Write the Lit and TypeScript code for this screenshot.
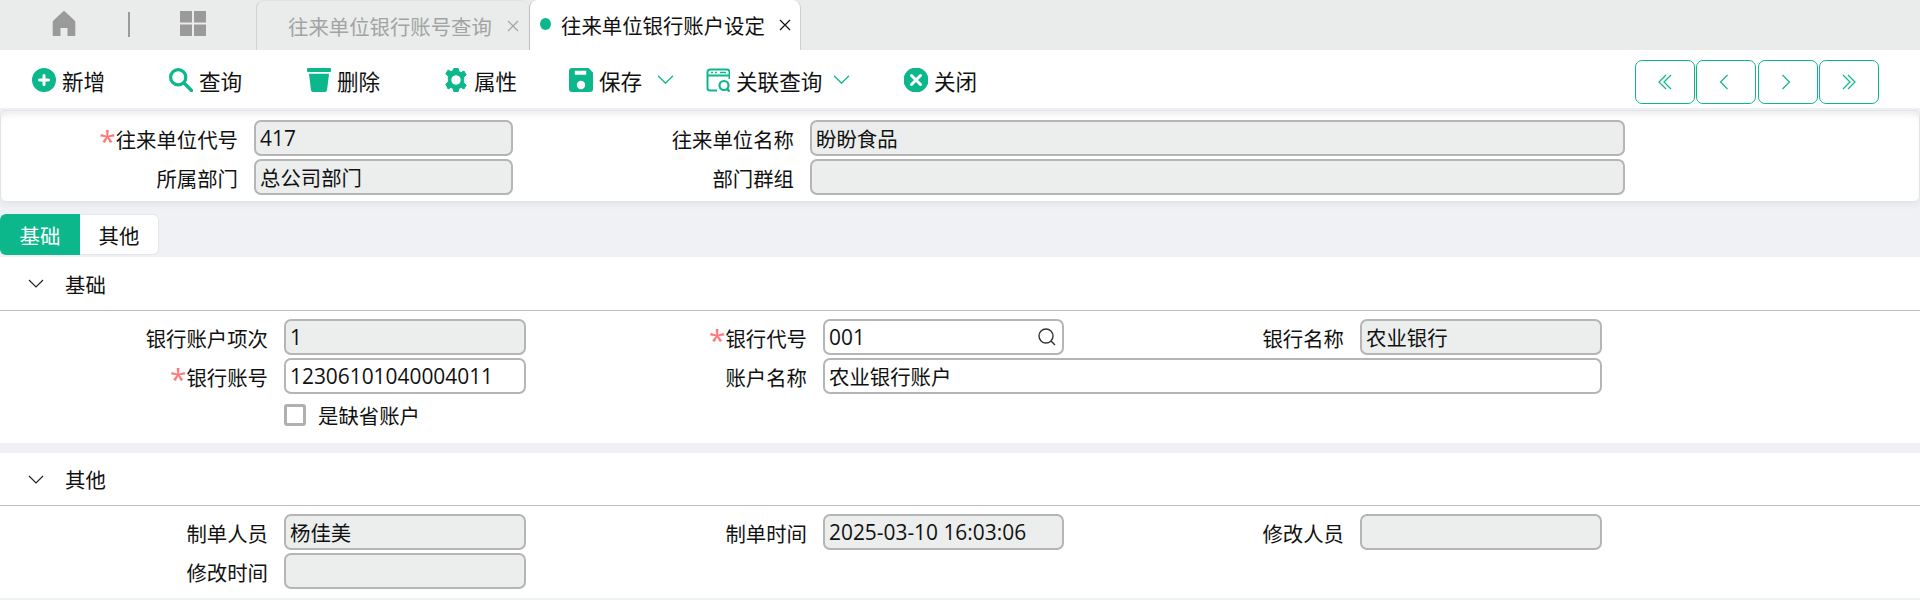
import { LitElement, html, css, svg } from "lit";
import { customElement } from "lit/decorators.js";

const icons: Record<string, unknown> = {
  add: svg`<circle cx="12" cy="12" r="12" fill="#0cb78c"/><path d="M12 7.500v9M7.500 12h9" stroke="#fff" stroke-width="3" stroke-linecap="round"/>`,
  search: svg`<circle cx="9.200" cy="9.200" r="7.600" fill="none" stroke="#0cb78c" stroke-width="3.200"/><path d="M15 15l7.500 7.500" stroke="#0cb78c" stroke-width="3.400" stroke-linecap="round"/>`,
  trash: svg`<rect x="0" y="0" width="24" height="4" rx="1" fill="#0cb78c"/><path d="M2 5.800h20l-1.900 16a2.400 2.400 0 0 1-2.400 2.200H6.300a2.400 2.400 0 0 1-2.400-2.200z" fill="#0cb78c"/>`,
  gear: svg`<path fill-rule="evenodd" fill="#0cb78c" stroke="#0cb78c" stroke-width="1" stroke-linejoin="round" d="M9.800.500h4.400l.7 3.100 2.200 1 2.800-1.600 2.300 3.900-2.500 2v6.200l2.500 2-2.300 3.900-2.800-1.600-2.200 1-.7 3.100H9.800l-.7-3.100-2.200-1-2.800 1.600L1.800 16.100l2.500-2V7.900l-2.500-2L4.100 2l2.800 1.600 2.200-1zM12 6.800a5.200 5.200 0 1 0 0 10.400a5.200 5.200 0 0 0 0-10.400z"/>`,
  save: svg`<path fill-rule="evenodd" fill="#0cb78c" d="M3 0h16.500L24 4.500V21a3 3 0 0 1-3 3H3a3 3 0 0 1-3-3V3a3 3 0 0 1 3-3zM5.800 2.800v4h11.400v-4zM12 12.800a4.200 4.200 0 1 0 0 8.400a4.200 4.200 0 0 0 0-8.400z"/>`,
  rel: svg`<path d="M11 22.500H4a2.500 2.500 0 0 1-2.500-2.500V4A2.500 2.500 0 0 1 4 1.500h17A2.500 2.500 0 0 1 23.500 4v7" fill="none" stroke="#0cb78c" stroke-width="2"/><path d="M2 7.500h21" stroke="#0cb78c" stroke-width="2"/><path d="M5 4.500h2M9 4.500h2M14 4.500h6" stroke="#0cb78c" stroke-width="1.600"/><circle cx="18" cy="17.500" r="4.500" fill="none" stroke="#0cb78c" stroke-width="2.200"/><path d="M21 21l2.500 2.500" stroke="#0cb78c" stroke-width="2.400"/>`,
  close: svg`<circle cx="12" cy="12" r="12.500" fill="#0cb78c"/><path d="M7.500 7.500l9 9M16.500 7.500l-9 9" stroke="#fff" stroke-width="3" stroke-linecap="round"/>`,
};

const actions = [
  { icon: "add", text: "新增", gap: "" },
  { icon: "search", text: "查询", gap: "" },
  { icon: "trash", text: "删除", gap: "" },
  { icon: "gear", text: "属性", gap: "" },
  { icon: "save", text: "保存", gap: "wide" },
  { icon: "rel", text: "关联查询", gap: "narrow" },
  { icon: "close", text: "关闭", gap: "" },
];

const navs = ["M9 1L2 8l7 7M14 1L7 8l7 7", "M9.500 1l-7 7 7 7", "M2.500 1l7 7-7 7", "M2 1l7 7-7 7M7 1l7 7-7 7"];

@customElement("app-root")
export class AppRoot extends LitElement {
  static styles = css`
    :host { display: block; height: 600px; overflow: hidden; background: #eff1f5; font-family: "Open Sans", "Noto Sans CJK SC", sans-serif; font-size: 20.4px; color: #111; }
  `;
  render() {
    return html`<top-tabs></top-tabs><tool-bar></tool-bar><form-body></form-body>`;
  }
}

@customElement("top-tabs")
export class TopTabs extends LitElement {
  static styles = css`
    :host { display: flex; height: 50px; background: #e9eceb; align-items: stretch; }
    .home { width: 128px; display: flex; align-items: center; padding-left: 52px; box-sizing: border-box; }
    .home svg, .grid svg { margin-top: -3px; }
    .sep { width: 2px; height: 25px; background: #9a9a9a; align-self: center; margin-top: -1px; }
    .grid { width: 126px; display: flex; align-items: center; padding-left: 50px; box-sizing: border-box; }
    .tab { box-sizing: border-box; display: flex; align-items: center; border-radius: 8px 8px 0 0; white-space: nowrap; }
    .off { width: 273px; color: #a3a3a3; padding-left: 31px; border-left: 1px solid #cfd3d3; border-top: 1px solid #dfe3e3; }
    .on { background: #fff; color: #111; width: 272px; padding-left: 10px; border-left: 1px solid #bdbdbd; border-right: 1px solid #cfcfcf; }
    .dot { width: 11px; height: 12px; border-radius: 50%; background: #0cb78c; margin-right: 10px; flex: none; margin-top: -2px; }
    .x { margin-left: 14px; width: 12px; height: 12px; flex: none; }
    .x path { stroke: currentColor; stroke-width: 1.200; fill: none; }
    .off .x { margin-left: 15px; }
  `;
  render() {
    const x = html`<svg class="x" viewBox="0 0 12 12"><path d="M1 1l10 10M11 1L1 11" /></svg>`;
    return html`
      <div class="home"><svg width="24" height="25" viewBox="0 0 24 25"><path fill="#9a9a9a" d="M11 .500a1.500 1.500 0 0 1 2 0L22.500 9.500a2 2 0 0 1 .8 1.600V24a1 1 0 0 1-1 1H15.500V17h-7v8H1.700a1 1 0 0 1-1-1V11.100a2 2 0 0 1 .8-1.600z"/></svg></div>
      <div class="sep"></div>
      <div class="grid"><svg width="26" height="25" viewBox="0 0 26 25"><path fill="#9a9a9a" d="M0 0h12v11.500H0zM14 0h12v11.500H14zM0 13.500h12V25H0zM14 13.500h12V25H14z"/></svg></div>
      <div class="tab off"><span>往来单位银行账号查询</span>${x}</div>
      <div class="tab on"><span class="dot"></span><span>往来单位银行账户设定</span>${x}</div>`;
  }
}

@customElement("tool-bar")
export class ToolBar extends LitElement {
  static styles = css`
    :host { display: flex; height: 58px; background: #fff; align-items: center; box-sizing: border-box; padding-left: 32px; padding-right: 41px; font-size: 21.6px; }
    .items { display: grid; grid-template-columns: 137px 138px 137px 125px 137px 198px 80px; }
    .item { display: flex; align-items: center; white-space: nowrap; color: #111; }
    .txt { position: relative; top: 1px; }
    .ico { width: 24px; height: 24px; margin-right: 6px; flex: none; margin-top: 1px; }
    .chev { width: 17px; height: 9px; flex: none; margin-top: 1px; }
    .chev.wide { margin-left: 15px; }
    .chev.narrow { margin-left: 11px; }
    .chev path { fill: none; stroke: #0cb78c; stroke-width: 1.300; }
    .nav { margin-left: auto; display: flex; gap: 1.400px; margin-top: 6px; }
    .btn { width: 60px; height: 44px; box-sizing: border-box; border: 1px solid #0cb78c; border-radius: 7px; display: flex; align-items: center; justify-content: center; background: #fff; }
    .btn svg { width: 16px; height: 16px; }
    .btn path { fill: none; stroke: #0cb78c; stroke-width: 1.200; }
  `;
  render() {
    return html`
      <div class="items">
        ${actions.map((a) => html`<div class="item">
          <svg class="ico" viewBox="0 0 24 24">${icons[a.icon]}</svg><span class="txt">${a.text}</span>
          ${a.gap ? html`<svg class="chev ${a.gap}" viewBox="0 0 17 9"><path d="M1 .700l7.500 7.500L16 .700"/></svg>` : null}
        </div>`)}
      </div>
      <div class="nav">
        ${navs.map((d) => html`<div class="btn"><svg viewBox="0 0 16 16"><path d=${d}></path></svg></div>`)}
      </div>`;
  }
}

@customElement("form-body")
export class FormBody extends LitElement {
  static styles = css`
    :host { display: block; }
    .card { margin-top: 2px; height: 92px; box-sizing: border-box; background: #fff; border: 1px solid #e2e3e9; border-radius: 6px; padding-top: 9px;
      box-shadow: inset 0 8px 8px -6px rgba(0,0,0,.1), 0 3px 6px rgba(0,0,0,.05); }
    .grid { display: grid; row-gap: 3px; grid-auto-rows: 36px; }
    .head { grid-template-columns: 253px 259px 297px 815px; }
    .sec { grid-template-columns: 284px 242px 297px 241px 296px 242px; }
    .lab { display: flex; justify-content: flex-end; align-items: center; padding-right: 16px; white-space: nowrap; color: #111; padding-top: 2px; box-sizing: border-box; }
    .req { color: #f77; font-size: 30px; line-height: 20px; height: 20px; position: relative; top: 2px; }
    .inp { box-sizing: border-box; height: 36px; border: 2px solid #b5b5b5; border-radius: 7px; background: #fff; display: flex; align-items: center; padding-left: 4px; white-space: nowrap; color: #111; }
    .dis { background: #eceeed; }
    .num { font-size: 20.900px; }
    .span4 { grid-column: 4 / 7; }
    .inp svg { margin-left: auto; margin-right: 6px; }
    .tabs { display: flex; margin-top: 12px; height: 41px; }
    .t { width: 79px; display: flex; align-items: center; justify-content: center; background: #fff; border: 1px solid #e3e5ea; box-sizing: border-box; border-radius: 0 6px 6px 0; border-left: none; }
    .t.act { width: 80px; background: #0cb78c; color: #fff; border: none; border-radius: 6px 0 0 6px; }
    .section { background: #fff; margin-bottom: 10px; }
    .s1 { margin-top: 2px; height: 186px; }
    .s2 { height: 145px; }
    .sh { box-sizing: border-box; border-bottom: 1px solid #bdbdbd; display: flex; align-items: center; padding-left: 28px; }
    .s1 .sh { height: 54px; }
    .s2 .sh { height: 53px; }
    .sh svg { width: 16px; height: 9px; margin-right: 21px; }
    .sh path { fill: none; stroke: #222; stroke-width: 1.200; }
    .sb { padding-top: 8px; }
    .chk { grid-column: 2 / 7; display: flex; align-items: center; height: 22px; margin-top: 7px; color: #111; }
    .box { width: 22px; height: 22px; box-sizing: border-box; border: 3px solid #b0b0b0; border-radius: 3px; margin-right: 12px; }
  `;
  private field(label: string, value: string, opts: { req?: boolean; dis?: boolean; cls?: string; search?: boolean } = {}) {
    const numeric = /^[\d\s:-]+$/.test(value);
    return html`<div class="lab">${opts.req ? html`<span class="req">*</span>` : null}${label}</div>
      <div class="inp ${opts.dis ? "dis" : ""} ${opts.cls ?? ""} ${numeric ? "num" : ""}">${value}
        ${opts.search ? html`<svg width="18" height="18" viewBox="0 0 18 18"><circle cx="8" cy="8" r="7" fill="none" stroke="#333" stroke-width="1.400"/><path d="M13 13l4 4" stroke="#333" stroke-width="1.400"/></svg>` : null}
      </div>`;
  }
  private header(title: string) {
    return html`<div class="sh"><svg viewBox="0 0 16 9"><path d="M1 1l7 7 7-7"/></svg>${title}</div>`;
  }
  render() {
    const d = { dis: true };
    return html`
      <div class="card"><div class="grid head">
        ${this.field("往来单位代号", "417", { req: true, dis: true })}
        ${this.field("往来单位名称", "盼盼食品", d)}
        ${this.field("所属部门", "总公司部门", d)}
        ${this.field("部门群组", "", d)}
      </div></div>
      <div class="tabs"><div class="t act">基础</div><div class="t">其他</div></div>
      <div class="section s1">
        ${this.header("基础")}
        <div class="sb grid sec">
          ${this.field("银行账户项次", "1", d)}
          ${this.field("银行代号", "001", { req: true, search: true })}
          ${this.field("银行名称", "农业银行", d)}
          ${this.field("银行账号", "12306101040004011", { req: true })}
          ${this.field("账户名称", "农业银行账户", { cls: "span4" })}
          <div class="chk"><span class="box"></span>是缺省账户</div>
        </div>
      </div>
      <div class="section s2">
        ${this.header("其他")}
        <div class="sb grid sec">
          ${this.field("制单人员", "杨佳美", d)}
          ${this.field("制单时间", "2025-03-10 16:03:06", d)}
          ${this.field("修改人员", "", d)}
          ${this.field("修改时间", "", d)}
        </div>
      </div>`;
  }
}
